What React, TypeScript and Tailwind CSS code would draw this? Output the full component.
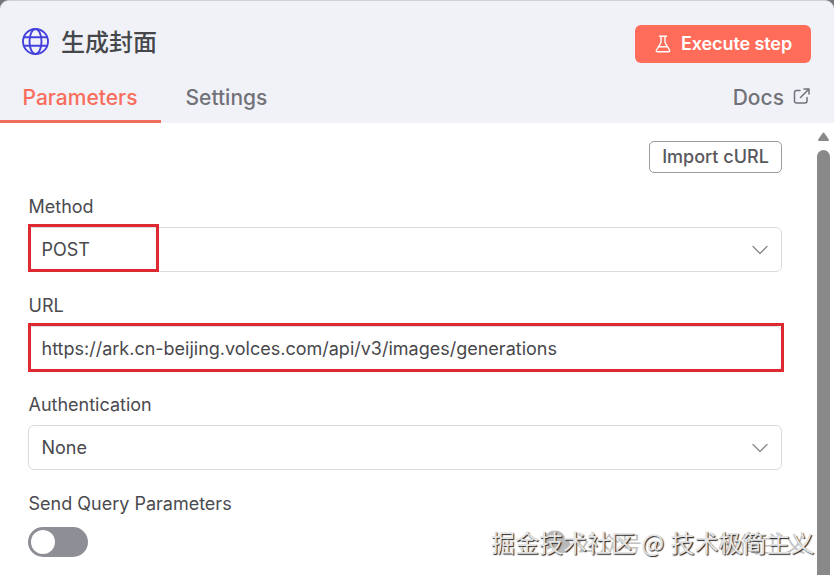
import React from 'react';

const LABEL = 'h-[22px] pl-[0.5px] text-[18px] leading-[22px] text-[#4b4b4f]';
const FIELD =
  'mt-[9px] flex h-[45px] items-center justify-between rounded-md border border-[#d9dbde] bg-white pl-[12.5px] pr-3.5 text-[18px] text-[#48484c]';

function Chevron() {
  return (
    <svg className="-mr-px h-4 w-4" viewBox="0 0 16 16" fill="none" stroke="#88898f" strokeWidth="1.3">
      <path strokeLinecap="round" strokeLinejoin="round" d="M1 4.5l7 7 7-7" />
    </svg>
  );
}

function Header() {
  return (
    <header className="flex h-[123px] flex-col rounded-t-[9px] border-t border-[#d0d1d6] bg-[#f1f2f8]">
      <div className="flex h-[84px] items-center justify-between pb-1 pl-[22px] pr-[23px]">
        <div className="flex items-center gap-3">
          <svg className="h-[27px] w-[27px]" viewBox="0 0 27 27" fill="none" stroke="#4441dc" strokeWidth="1.9">
            <circle cx="13.5" cy="13.5" r="12.5" />
            <ellipse cx="13.5" cy="13.5" rx="6" ry="12.5" />
            <path d="M1.7 9.2h23.6M1.7 17.8h23.6" />
          </svg>
          <h1 className="font-['Noto_Sans_CJK_SC',sans-serif] text-[24px] font-medium leading-[32px] text-[#46474b]">
            生成封面
          </h1>
        </div>
        <button className="mt-[5px] flex h-[38px] w-[176px] items-center rounded-md bg-[#ff6d5a] pl-5 text-[18px] font-semibold tracking-[-0.1px] text-white">
          <svg className="mr-[10px] h-[18px] w-4" viewBox="0 0 16 18" fill="none" stroke="white" strokeWidth="1.4">
            <path strokeLinecap="round" strokeLinejoin="round" d="M4.5 1.2h7M6 1.2v6.3L1.5 15q-.8 1.8 1.1 1.8h10.8q1.9 0 1.1-1.8L10 7.5V1.2M4 11.8h8" />
          </svg>
          Execute step
        </button>
      </div>

      {/* Tabs */}
      <nav className="flex h-[38px] justify-between pr-6 text-[21px] font-medium leading-[26px] text-[#717278]">
        <div className="flex">
          <span className="w-[161px] border-b-[3px] border-[#f16d5c] pl-[22.5px] text-[#f96d5c]">Parameters</span>
          <span className="pl-[24.5px]">Settings</span>
        </div>
        <a className="flex gap-[9px]">
          Docs
          <svg className="mt-[3px] h-[17px] w-[17px]" viewBox="0 0 17 17" fill="none" stroke="#717278" strokeWidth="1.5">
            <path strokeLinecap="round" strokeLinejoin="round" d="M7 2.5H3.5Q1.5 2.5 1.5 4.5V13q0 2 2 2H12q2 0 2-2V9.5M11 1h5v5M16 1L7.5 9.5" />
          </svg>
        </a>
      </nav>
    </header>
  );
}

function Watermark() {
  return (
    <div className="absolute left-[491px] top-[524px] h-9 w-[328px] whitespace-nowrap font-['Noto_Sans_CJK_SC',sans-serif] text-[24px] leading-9">
      <div className="absolute left-[53px] top-0 flex items-center text-[22px] text-[#c2c2c2]">
        <svg className="mr-1 h-6 w-7" viewBox="0 0 28 24" fill="#b9b9b9">
          <ellipse cx="11" cy="9" rx="10" ry="8.5" />
          <ellipse cx="19" cy="16" rx="8" ry="7" />
          <path d="M4 14l-1 6 6-3z" />
          <circle cx="7.5" cy="7" r="1.3" fill="white" />
          <circle cx="14" cy="7" r="1.3" fill="white" />
        </svg>
        公众号 · 技术极简主义
      </div>
      <div className="absolute left-0 top-0 text-[#e4e4e4] [text-shadow:1px_1px_1px_#222] [word-spacing:1px]">
        掘金技术社区 @ 技术极简主义
      </div>
    </div>
  );
}

export default function App() {
  return (
    <main className="relative h-[575px] w-[834px] overflow-hidden bg-[#77777b] font-['Inter','Noto_Sans_CJK_SC',sans-serif]">
      <Header />

      <div className="flex h-[452px] bg-white">
        <div className="w-[817px] pl-7 pr-[35px] pt-[18px]">
          <div className="flex justify-end">
            <button className="h-8 w-[133px] rounded-[5px] border border-[#9b9ca0] text-[18px] font-medium leading-[30px] text-[#58585c]">
              Import cURL
            </button>
          </div>

          <div className="mt-[23px] flex flex-col gap-[23px]">
            <div>
              <div className={LABEL}>Method</div>
              <div className={`relative ${FIELD}`}>
                POST
                <Chevron />
                <div className="absolute -left-px -top-1 h-12 w-[131px] border-[3px] border-[#dd2a30]" />
              </div>
            </div>
            <div>
              <div className={LABEL}>URL</div>
              <div className={`relative ${FIELD}`}>
                https://ark.cn-beijing.volces.com/api/v3/images/generations
                <div className="absolute -left-px -top-1 h-[49px] w-[756px] border-[3px] border-[#dd2a30]" />
              </div>
            </div>
            <div>
              <div className={LABEL}>Authentication</div>
              <div className={FIELD}>
                None
                <Chevron />
              </div>
            </div>
            <div>
              <div className={LABEL}>Send Query Parameters</div>
              <div className="mt-3 h-[30px] w-[60px] rounded-full bg-[#8e8f96] p-[3px]">
                <div className="h-6 w-6 rounded-full bg-white" />
              </div>
            </div>
          </div>
        </div>

        {/* Scrollbar */}
        <div className="flex w-[13px] flex-col items-center pt-[9px]">
          <svg className="h-[9px] w-[11px]" viewBox="0 0 11 9">
            <path d="M5.5 1.5L10 8H1z" fill="#898989" stroke="#898989" strokeWidth="2" strokeLinejoin="round" />
          </svg>
          <div className="mt-[9px] w-[13px] flex-1 rounded-t-full bg-[#898989]" />
        </div>
      </div>

      <Watermark />
    </main>
  );
}
